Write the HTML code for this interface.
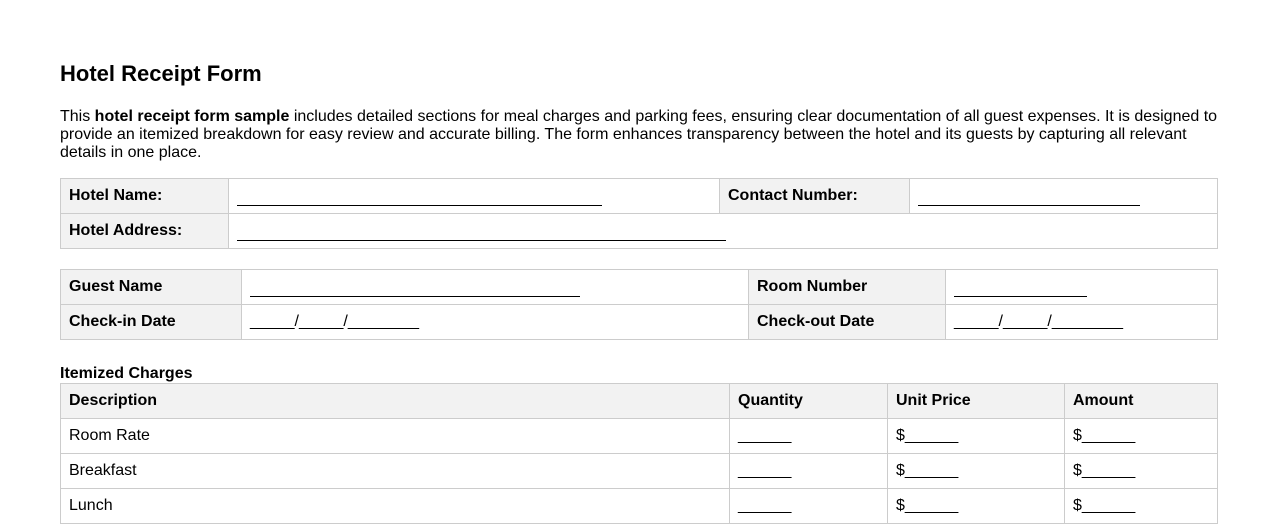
<!DOCTYPE html>
<html><head><style>
body{margin:0;background:#fff;font-family:"Liberation Sans",Arial,sans-serif;color:#000;width:1278px;height:501px;overflow:hidden;position:relative}
h1{position:absolute;left:60px;top:61px;margin:0;font-size:22px;font-weight:bold}
p{position:absolute;left:60px;top:108px;width:1160px;margin:0;font-size:16px;line-height:18px}
table{position:absolute;left:60px;border-collapse:collapse;table-layout:fixed;font-size:16px}
td{border:1px solid #ccc;height:35px;padding:0 0 0 8px;box-sizing:border-box;vertical-align:middle}
.h{background:#f2f2f2;font-weight:bold}
.u{display:inline-block;border-bottom:1px solid #000;height:14px;vertical-align:baseline;position:relative;top:5px}
.cap{position:absolute;left:60px;top:365px;font-size:16px;font-weight:bold}
</style></head><body>
<h1>Hotel Receipt Form</h1>
<p>This <b>hotel receipt form sample</b> includes detailed sections for meal charges and parking fees, ensuring clear documentation of all guest expenses. It is designed to provide an itemized breakdown for easy review and accurate billing. The form enhances transparency between the hotel and its guests by capturing all relevant details in one place.</p>
<table style="top:178px;width:1157px">
<colgroup><col style="width:168px"><col style="width:491px"><col style="width:190px"><col style="width:308px"></colgroup>
<tr><td class="h">Hotel Name:</td><td><span class="u" style="width:365px"></span></td><td class="h">Contact Number:</td><td><span class="u" style="width:222px"></span></td></tr>
<tr><td class="h">Hotel Address:</td><td colspan="3"><span class="u" style="width:489px"></span></td></tr>
</table>
<table style="top:269px;width:1157px">
<colgroup><col style="width:181px"><col style="width:507px"><col style="width:197px"><col style="width:272px"></colgroup>
<tr><td class="h">Guest Name</td><td><span class="u" style="width:330px"></span></td><td class="h">Room Number</td><td><span class="u" style="width:133px"></span></td></tr>
<tr><td class="h">Check-in Date</td><td>_____/_____/________</td><td class="h">Check-out Date</td><td>_____/_____/________</td></tr>
</table>
<div class="cap">Itemized Charges</div>
<table style="top:383px;width:1157px">
<colgroup><col style="width:669px"><col style="width:158px"><col style="width:177px"><col style="width:153px"></colgroup>
<tr><td class="h">Description</td><td class="h">Quantity</td><td class="h">Unit Price</td><td class="h">Amount</td></tr>
<tr><td>Room Rate</td><td>______</td><td>$______</td><td>$______</td></tr>
<tr><td>Breakfast</td><td>______</td><td>$______</td><td>$______</td></tr>
<tr><td>Lunch</td><td>______</td><td>$______</td><td>$______</td></tr>
</table>
</body></html>
